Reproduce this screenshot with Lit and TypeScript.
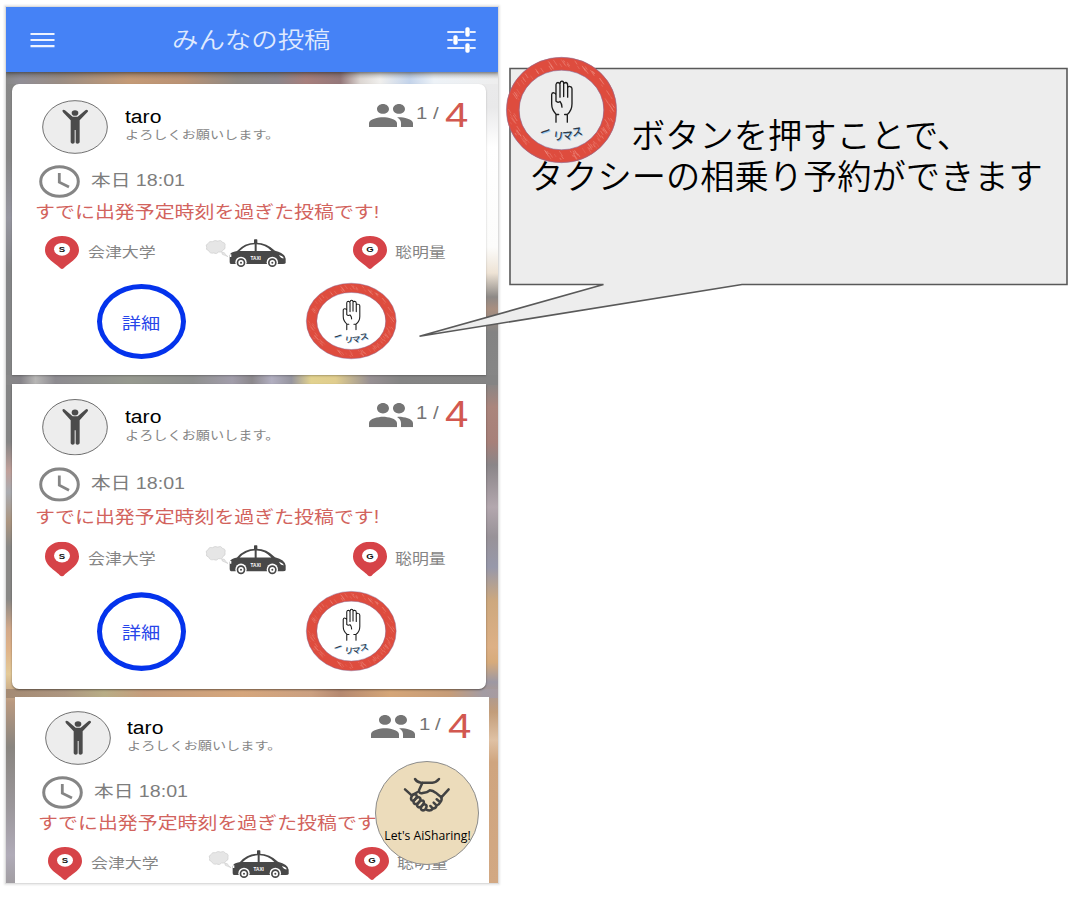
import { LitElement, html, svg, css } from "lit";
import { customElement, property } from "lit/decorators.js";

const FONT = css`"Liberation Sans", "Noto Sans CJK JP", sans-serif`;

/** Chalk-textured red ring with a raised hand and the "ride" lettering. */
@customElement("ride-stamp")
class RideStamp extends LitElement {
  static styles = css`
    :host { display: block; }
    svg { display: block; width: 100%; height: 100%; overflow: visible; }
    .ring { fill: none; stroke: #de4c3e; stroke-width: 13; }
    .edge { fill: none; stroke: #8a6f9c; stroke-width: 0.6; }
    .chalk { fill: none; stroke: #f4aba1; stroke-width: 0.5; }
    .hand { fill: none; stroke: #1c1c1c; stroke-width: 4; stroke-linecap: round; stroke-linejoin: round; }
    .word { font: 500 11px "Noto Sans CJK JP", sans-serif; fill: #2d3a48; }
    .glow { fill: #9cc8ee; }
  `;
  @property({ type: Boolean }) filled = false;

  private scratches() {
    const out = [];
    let seed = 17;
    const rnd = () => (seed = (seed * 16807) % 2147483647) / 2147483647;
    for (let i = 0; i < 110; i++) {
      const a = rnd() * Math.PI * 2;
      const l = 1 + rnd() * 2.6;
      const r = 48.6 + (rnd() - 0.5) * (11 - l * 2);
      const cx = 55.5 + Math.cos(a) * r;
      const cy = 53 + Math.sin(a) * r * 0.95;
      const dx = l * 0.6;
      const dy = l * 0.9;
      out.push(svg`<path class="chalk" opacity=${(0.35 + rnd() * 0.6).toFixed(2)}
        d="M${(cx - dx).toFixed(1)} ${(cy - dy).toFixed(1)}L${(cx + dx).toFixed(1)} ${(cy + dy).toFixed(1)}"/>`);
    }
    return out;
  }

  render() {
    const word = (cls: string, dx: number, dy: number) => svg`
      <g class=${cls} transform="translate(${dx} ${dy})">
        <text transform="translate(35.5 80) rotate(-20)">ー</text>
        <text transform="translate(46.5 82.5) rotate(6)">リ</text>
        <text transform="translate(56.5 83) rotate(-6)">マ</text>
        <text transform="translate(66.5 79.5) rotate(-10)">ス</text>
      </g>`;
    return html`<svg viewBox="0 0 111 106" preserveAspectRatio="none">
      ${this.filled ? svg`<ellipse cx="55.5" cy="53" rx="50" ry="48" fill="#fff"/>` : null}
      <ellipse class="ring" cx="55.5" cy="53" rx="48.6" ry="46.2"/>
      ${this.scratches()}
      <ellipse class="edge" cx="55.5" cy="53" rx="55.1" ry="52.7"/>
      <ellipse class="edge" cx="55.5" cy="53" rx="42.4" ry="39.8"/>
      <path class="hand" transform="translate(-11 -16.5) scale(.3333)"
        d="M183 245V221M183 222h8M183 221C174 212 170 203 170 190V162Q171 156 177 157Q183 158 183 164V182M183 164V132Q184 126 189 126Q195 127 195 133V170M195 130Q196 122 201 122Q206 122 206 129V168M206 130Q208 126 212 126Q218 127 218 134V170M218 142Q220 137 225 138Q231 139 231 145V190Q231 210 217 222V245M217 222h-8M183 182Q188 188 195 183Q201 190 201 200"/>
      <g class="word">${word("glow", 0.8, 0.9)}${word("ink", 0, 0)}</g>
    </svg>`;
  }
}

/** Map pin carrying a start or goal letter. */
@customElement("map-pin")
class MapPin extends LitElement {
  static styles = css`
    :host { display: block; width: 34px; height: 33px; flex: none; }
    svg { display: block; width: 100%; height: 100%; }
    text { font: bold 23px "Liberation Sans", sans-serif; text-anchor: middle; fill: #111; }
  `;
  @property() letter = "";
  render() {
    return html`<svg viewBox="136 228 102 99" preserveAspectRatio="none">
      <path fill="#d64348" d="M187 228C157 228 136 246 136 270C136 298 172 312 182 325Q187 329 192 325C202 312 238 298 238 270C238 246 217 228 187 228Z"/>
      <ellipse cx="187" cy="268" rx="24" ry="19" fill="#fff"/>
      <text transform="translate(187 276) scale(1.25 1)">${this.letter}</text>
    </svg>`;
  }
}

@customElement("taxi-icon")
class TaxiIcon extends LitElement {
  static styles = css`
    :host { display: block; width: 82px; height: 30px; flex: none; }
    svg { display: block; width: 100%; height: 100%; }
    .cloud { fill: #e6e6e6; stroke: #c4c4c4; stroke-width: 1.5; }
    .sign { font: bold 14px "Liberation Sans", sans-serif; fill: #fff; text-anchor: middle; }
  `;
  render() {
    return html`<svg viewBox="616 236 246 90">
      <path class="cloud" d="M627 274Q617 271 621 264Q616 256 625 253Q628 244 638 247Q646 241 654 245Q664 240 669 249Q679 251 676 260Q679 269 670 272Q667 281 657 278Q650 286 642 281Q631 284 627 274Z"/>
      <path class="cloud" d="M666 279l8 1 4 6 7 6-10-4-7-3z"/>
      <rect x="763" y="240" width="10" height="14" rx="2" fill="#444"/>
      <path fill="#484848" d="M690 288Q692 278 712 275Q733 250 768 250Q800 249 826 274Q856 281 858 298V311Q857 314 850 314H694Q690 314 690 308Z"/>
      <path fill="#fff" d="M720 275Q739 256 765 255V275ZM771 255Q796 255 815 275H771Z"/>
      <path fill="#fff" d="M838 287Q850 290 853 297Q843 298 838 287ZM690 285h5v8h-5z"/>
      <g fill="#fff"><circle cx="724" cy="309" r="17"/><circle cx="818" cy="309" r="17"/></g>
      <g fill="#fff" stroke="#484848" stroke-width="5"><circle cx="724" cy="310" r="10.5"/><circle cx="818" cy="310" r="10.5"/></g>
      <g fill="#484848"><circle cx="724" cy="310" r="3"/><circle cx="818" cy="310" r="3"/></g>
      <text class="sign" x="768" y="303">TAXI</text>
    </svg>`;
  }
}

@customElement("ride-card")
class RideCard extends LitElement {
  static styles = css`
    :host { display: block; background: #fff; overflow: hidden; font-family: ${FONT}; }
    .inner { display: flex; flex-direction: column; width: 474px; transform-origin: 0 0; }
    .wide { display: block; white-space: nowrap; transform: scaleX(1.2); transform-origin: 0 50%; }
    .head { display: flex; height: 65px; padding-top: 16px; }
    .avatar { display: block; width: 66px; height: 54px; margin-left: 30px; flex: none; }
    .who { width: 200px; margin-left: 16.5px; padding-top: 8px; }
    .name { font-size: 17.6px; line-height: 19px; color: #000; }
    .note { font-size: 11.8px; line-height: 17px; color: #858585; }
    .seats { display: flex; align-items: flex-start; margin-left: 44px; padding-top: 3.5px; }
    .people { display: block; width: 44px; height: 23px; flex: none; }
    .count { width: 32.5px; font-size: 17px; line-height: 20px; color: #757575; display: flex; }
    .one { width: 16.5px; margin-left: 3.5px; }
    .total { font-size: 35px; line-height: 22px; color: #d25850; width: 24px; }
    .when { display: flex; align-items: center; height: 33px; }
    .clock { display: block; width: 41px; height: 33px; margin: 0 11px 0 27px; flex: none; }
    .time { font-size: 16.4px; line-height: 20px; color: #7d7d7d; padding-bottom: 4px; }
    .warn { font-size: 16.6px; line-height: 29px; height: 30px; margin-left: 23px; color: #d2635d; }
    .route { display: flex; align-items: center; height: 49px; }
    .start { margin-left: 33px; }
    .place { font-size: 14.1px; line-height: 20px; color: #858585; margin-left: 9px; padding-bottom: 2px; }
    .from { width: 117px; }
    .taxi { margin-right: 65.5px; }
    .end { width: 60px; margin-left: 8px; }
    .actions { display: flex; align-items: center; height: 88px; }
    .detail { box-sizing: border-box; width: 89px; height: 75px; margin: 1px 0 0 84.5px; border: 5px solid #0433ec; border-radius: 50%; display: flex; align-items: center; justify-content: center; color: #2846ea; font-size: 16px; }
    .detail .wide { transform-origin: 50% 50%; }
    .stamp { width: 90.5px; height: 76px; margin-left: 120.5px; }
  `;
  @property({ type: Number }) stretch = 1;
  @property({ type: Number }) shift = 0;
  @property({ type: Boolean }) compact = false;

  render() {
    return html`<div class="inner" style="transform: translateY(${this.shift}px) scaleY(${this.stretch})">
      <div class="head">
        <svg class="avatar" viewBox="126 300 198 162" preserveAspectRatio="none">
          <ellipse cx="225" cy="381" rx="97" ry="79" fill="#ededed" stroke="#555" stroke-width="2.5"/>
          <g fill="#4b4b4b"><ellipse cx="225" cy="339" rx="10" ry="8.5"/>
            <path d="M187 332Q190 327 195 331L218 350H233L256 331Q261 327 264 332Q265 334 262 337L239 361V427Q238 431 232 431Q227 431 227 427V390H224V427Q224 431 218 431Q213 431 212 427V361L189 337Z"/></g>
        </svg>
        <div class="who">
          <span class="wide name">taro</span>
          <span class="wide note">よろしくお願いします。</span>
        </div>
        <div class="seats">
          <svg class="people" viewBox="1 5 22 14" preserveAspectRatio="none"><path fill="#757575" d="M16 11c1.66 0 2.99-1.34 2.99-3S17.66 5 16 5c-1.66 0-3 1.34-3 3s1.34 3 3 3zm-8 0c1.66 0 2.99-1.34 2.99-3S9.66 5 8 5C6.34 5 5 6.34 5 8s1.34 3 3 3zm0 2c-2.33 0-7 1.17-7 3.5V19h14v-2.5c0-2.33-4.67-3.5-7-3.5zm8 0c-.29 0-.62.02-.97.05 1.16.84 1.97 1.97 1.97 3.45V19h6v-2.5c0-2.33-4.67-3.5-7-3.5z"/></svg>
          <div class="count"><span class="wide one">1</span><span class="wide">/</span></div>
          <span class="wide total">4</span>
        </div>
      </div>
      <div class="when">
        <svg class="clock" viewBox="0 0 41 33" preserveAspectRatio="none" fill="none" stroke="#858585" stroke-width="3">
          <ellipse cx="20.5" cy="16.5" rx="18.8" ry="14.8"/><path d="M20.3 8V17.2L30 22" stroke-width="2.8"/>
        </svg>
        <span class="wide time">本日 18:01</span>
      </div>
      <span class="wide warn">すでに出発予定時刻を過ぎた投稿です!</span>
      <div class="route">
        <map-pin class="start" letter="S"></map-pin>
        <span class="wide place from">会津大学</span>
        <taxi-icon class="taxi"></taxi-icon>
        <map-pin letter="G"></map-pin>
        <span class="wide place end">聡明量</span>
      </div>
      ${this.compact ? null : html`<div class="actions">
        <div class="detail"><span class="wide">詳細</span></div>
        <ride-stamp class="stamp" filled></ride-stamp>
      </div>`}
    </div>`;
  }
}

@customElement("app-root")
class AppRoot extends LitElement {
  static styles = css`
    :host { display: block; position: relative; width: 1084px; height: 924px; background: #fff; overflow: hidden; font-family: ${FONT}; }
    .device { display: flow-root; }
    .phone {
      box-sizing: content-box; width: 492px; height: 876px; margin: 6px 0 0 5px; border: 1px solid #dcdcdc; overflow: hidden;
      box-shadow: 0 0 2px 1px #e6e6e6; display: flex; flex-direction: column; position: relative;
      background:
        linear-gradient(180deg, rgba(60,60,60,.35), transparent) 0 65px / 100% 7px no-repeat,
        linear-gradient(90deg, #888 0, #918e96 3%, #9a8d84 11%, #c49a76 25%, #b99275 36%, #8e8984 47%, #8b868b 55%, #a77f7c 61%, #94787a 68%, #dcd6d2 72%, #f0efed 76%, #c3d3ea 82%, #edf2f7 87%, #eee 100%) 0 0 / 100% 77px no-repeat,
        linear-gradient(90deg, #888 0, #868489 3%, #b7b6b5 6%, #8d8b90 10%, #96998f 25%, #8f908f 38%, #a19daa 46%, #8b888c 50%, #b1aec0 54%, #96959f 58%, #e2d28f 62%, #e0cd8e 67%, #979093 74%, #858585 80%, #848484 100%) 0 368px / 100% 10px no-repeat,
        linear-gradient(90deg, #a48a73 0, #ad9680 12%, #b8ad86 20%, #c59d7c 28%, #d5a67c 48%, #cba081 62%, #b58970 68%, #d5a678 78%, #c69c78 90%, #a39ca4 97%, #a79ba0 100%) 0 682px / 100% 9px no-repeat,
        linear-gradient(180deg, #888 0, #878787 150px, #9696a0 211px, #858688 260px, #858585 435px, #c0a09a 464px, #a9abb0 485px, #ab9580 515px, #898886 540px, #898886 592px, #d2a98a 622px, #dfb389 642px, #e4ca98 667px, #b99980 695px, #898580 740px, #9b979b 800px, #b0abb8 848px, #a19da2 876px) 0 0 / 50% 100% no-repeat,
        linear-gradient(180deg, #eee 0, #e9e9ea 100px, #fff 140px, #fcfcfb 240px, #eee3d5 266px, #8d8986 290px, #a98f80 302px, #838383 325px, #868686 375px, #aa857c 400px, #a78079 435px, #8a8588 458px, #b3a7ae 500px, #989298 530px, #9798aa 560px, #cda87e 594px, #ddb085 640px, #d7ab7b 655px, #9d98a3 675px, #c29d7a 705px, #dfc1a4 733px, #cfa57f 755px, #d2a883 876px) 100% 0 / 50% 100% no-repeat;
    }
    .bar { display: flex; align-items: center; height: 65px; flex: none; background: #4582f6; box-shadow: 0 1px 3px rgba(0,0,0,.35); }
    .menu { display: block; width: 25px; height: 16px; margin-left: 24px; flex: none; }
    .title { margin: 0 0 3px 117px; width: 274.5px; white-space: nowrap; font: 350 22.4px/30px "Noto Sans CJK JP", sans-serif; color: #dfe9fe; }
    .title span { display: inline-block; transform: scaleX(1.18); transform-origin: 0 50%; }
    .tune { display: block; width: 29px; height: 26px; flex: none; }
    .card { flex: none; margin-left: 6px; width: 474px; }
    .first { height: 291px; margin-top: 12px; border-radius: 7px 7px 0 0; box-shadow: 0 1px 2px rgba(0,0,0,.25); }
    .second { height: 305px; margin-top: 9px; border-radius: 0 0 7px 7px; box-shadow: 0 1px 2px rgba(0,0,0,.45); }
    .third { height: 187px; margin: 8px 0 0 8.5px; }
    .fab { position: absolute; left: 368.5px; top: 754px; width: 104px; height: 104px; box-sizing: border-box; border: 1px solid #8d8d8d; border-radius: 50%; background: #ecdcbb; display: flex; flex-direction: column; align-items: center; }
    .shake { display: block; width: 50px; height: 38.3px; margin-top: 14px; flex: none; }
    .label { font: 12.2px/16px "Open Sans", "Noto Sans", sans-serif; color: #000; white-space: nowrap; margin: 14px 0 0 2px; }
    .callout { position: absolute; left: 410px; top: 56px; width: 674px; height: 290px; }
    .bubble { position: absolute; left: 0; top: 0; display: block; }
    .mark { position: absolute; left: 96px; top: 0.5px; width: 111px; height: 106px; }
    .say { position: relative; margin: 0; padding: 57px 0 0 119px; font: 350 34.25px/40.5px "Noto Sans CJK JP", sans-serif; color: #000; white-space: nowrap; }
    .line { display: block; height: 40.5px; }
    .indent { padding-left: 102px; }
  `;

  render() {
    return html`
      <div class="device"><div class="phone">
        <header class="bar">
          <svg class="menu" viewBox="0 0 25 16" fill="none" stroke="#eef3ff" stroke-width="2.2"><path d="M0.5 2h24M0.5 8h24M0.5 14.2h24"/></svg>
          <h1 class="title"><span>みんなの投稿</span></h1>
          <svg class="tune" viewBox="591 79 87 78" fill="#fff">
            <path stroke="#e4edff" stroke-width="6" d="M592 94h51M660 94h17M592 118h16M624 118h53M592 142h51M660 142h17"/>
            <rect x="646" y="80" width="13" height="28" rx="5"/><rect x="610" y="104" width="13" height="28" rx="5"/><rect x="646" y="128" width="13" height="28" rx="5"/>
          </svg>
        </header>
        <ride-card class="card first"></ride-card>
        <ride-card class="card second" stretch="1.051" shift="-2"></ride-card>
        <ride-card class="card third" shift="-2" compact></ride-card>
        <div class="fab">
          <svg class="shake" viewBox="455 318 150 115" fill="none" stroke="#424242" stroke-width="7.5" stroke-linecap="round" stroke-linejoin="round">
            <path d="M494 327Q500 337 512 338H546Q558 337 566 327"/>
            <path d="M516 339L506 361Q505 372 517 369Q532 367 538 361Q548 362 556 368L573 382L595 358"/>
            <path d="M464 358L484 376L502 366"/>
            <path d="M486 376Q479 386 484 391Q490 395 496 386Q503 376 496 374Q490 371 486 376Z"/>
            <path d="M497 385Q485 396 492 401Q499 406 507 395Q514 386 507 382Q502 380 497 385Z"/>
            <path d="M507 395Q496 406 503 411Q509 415 517 405Q524 396 518 392Q512 390 507 395Z"/>
            <path d="M517 405Q508 415 514 420Q520 424 526 416Q531 409 527 405Q522 401 517 405Z"/>
            <path d="M573 382Q576 390 570 397Q566 405 559 407Q556 416 548 416Q540 425 528 419M570 397L559 388M559 407L550 398M548 416L540 408"/>
          </svg>
          <span class="label">Let's AiSharing!</span>
        </div>
      </div></div>
      <section class="callout">
        <svg class="bubble" width="674" height="290" viewBox="410 56 674 290">
          <path d="M510 68.5H1067V284.5H742L419.5 336.3L603.5 284.5H510Z" fill="#ededed" stroke="#595959" stroke-width="1.6"/>
        </svg>
        <p class="say"><span class="line indent">ボタンを押すことで、</span><span class="line">タクシーの相乗り予約ができます</span></p>
        <ride-stamp class="mark"></ride-stamp>
      </section>`;
  }
}
